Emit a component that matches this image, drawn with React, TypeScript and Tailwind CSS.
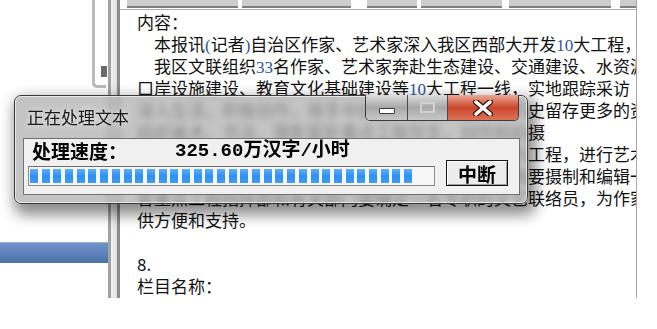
const serif = "font-['Liberation_Serif',serif] text-[#2f5596]";

function N({ children }: { children: React.ReactNode }) {
  return <span className={serif}>{children}</span>;
}

const blocks = Array.from({ length: 33 });
const IND = "\u3000";

function Line({ children }: { children?: React.ReactNode }) {
  return <div className="h-[22px] whitespace-nowrap leading-[22px]">{children}</div>;
}

export default function App() {
  return (
    <div className="relative h-[329px] w-[657px] overflow-hidden bg-white font-['Noto_Sans_CJK_SC','Noto_Sans',sans-serif] text-[#111]">
      <div className="flex h-[298px]">
        {/* left tree pane */}
        <div className="flex w-[108px] flex-col">
          <div className="flex h-[88px] justify-end pr-[2px]">
            <div className="flex w-[14px] flex-col justify-end rounded-bl-[5px] border-b-[3px] border-l-[3px] border-[#bcbcbc] pb-[8px] pl-[6px]">
              <div className="h-[11px] w-[6px] bg-[#6b6b6b]" />
            </div>
          </div>
          <div className="mt-[154px] h-[21px] border-t border-[#9db5dc] bg-gradient-to-b from-[#6f93c9] to-[#4d71aa]" />
        </div>

        {/* splitter */}
        <div className="flex w-[12px]">
          <div className="w-[3px] bg-[#a2a2a2]" />
          <div className="w-[6px] bg-gradient-to-r from-[#f2f2f2] to-[#dedede]" />
          <div className="w-[3px] bg-[#8c8c8c]" />
        </div>

        {/* document pane */}
        <div className="w-[517px] overflow-hidden border-r border-[#a6a6a6]">
          <div className="flex h-[8px] pl-[7px]">
            <div className="w-[111px] border-b-2 border-[#7e7e7e] bg-[#cdcdcd]" />
            <div className="ml-[4px] w-[110px] border-b-2 border-[#7e7e7e] bg-[#cdcdcd]" />
            <div className="ml-[16px] w-[50px] border-b-2 border-[#7e7e7e] bg-[#cdcdcd]" />
            <div className="ml-[4px] w-[81px] border-b-2 border-[#7e7e7e] bg-[#cdcdcd]" />
            <div className="ml-[7px] w-[103px] border-b-2 border-[#7e7e7e] bg-[#cdcdcd]" />
            <div className="ml-[9px] w-[16px] border-b-2 border-[#7e7e7e] bg-[#cdcdcd]" />
          </div>
          <div className="mt-px h-px bg-[#ababab]" />

          <div className="pl-[17px] pt-px text-[17px]">
            <Line>内容：</Line>
            <Line>
              {IND}本报讯<N>(</N>记者<N>)</N>自治区作家、艺术家深入我区西部大开发<N>10</N>大工程，
            </Line>
            <Line>
              {IND}我区文联组织<N>33</N>名作家、艺术家奔赴生态建设、交通建设、水资源
            </Line>
            <Line>
              口岸设施建设、教育文化基础建设等<N>10</N>大工程一线，实地跟踪采访
            </Line>
            <Line>深入生活，积极创作，用手中的笔、相机和镜头为历史留存更多的资料</Line>
            <Line>组织美术、书法、摄影家赴重点工程写生、创作和拍摄</Line>
            <Line>音乐家、舞蹈家、戏剧家深入西部大开发的各项重点工程，进行艺术采风</Line>
            <Line>文联还将组织专业摄影人员全程跟踪采访，同时还需要摄制和编辑一部</Line>
            <Line>各重点工程指挥部和有关部门要确定一名专职的文艺联络员，为作家艺术家提</Line>
            <Line>供方便和支持。</Line>
            <Line />
            <Line>8.</Line>
            <Line>栏目名称：</Line>
          </div>
        </div>
      </div>

      {/* progress dialog */}
      <div className="absolute left-[14px] top-[95px] h-[109px] w-[514px] rounded-[7px] border border-[#3a3a3a] bg-[#b0b0b0]/75 shadow-[4px_7px_14px_4px_rgba(0,0,0,0.45)] backdrop-blur-[3px]">
        <div className="flex h-full flex-col rounded-[6px] border border-white/60 pb-[7px] pl-[7px] pr-[6px]">
          <div className="flex h-[41px] items-start justify-between">
            <div className="pl-[4px] pt-[9px] text-[17px] leading-[22px] text-[#1a1a1a] [text-shadow:0_0_6px_rgba(255,255,255,0.9)]">
              正在处理文本
            </div>
            <div className="-mt-[2px] mr-[1px] flex h-[26px] overflow-hidden rounded-b-[5px] border border-t-0 border-[#3c3c3c]">
              <div className="flex w-[42px] items-center justify-center border-r border-[#4a4a4a] bg-gradient-to-b from-[#dedede] via-[#a8a8a8] to-[#c8c8c8]">
                <div className="mt-[7px] h-[6px] w-[16px] rounded-[1px] border border-[#3a3a3a] bg-white" />
              </div>
              <div className="flex w-[40px] items-center justify-center border-r border-[#4a4a4a] bg-gradient-to-b from-[#dedede] via-[#a8a8a8] to-[#c8c8c8]">
                <div className="h-[11px] w-[15px] border-2 border-[#d2d2d2] bg-transparent" />
              </div>
              <div className="flex w-[70px] items-center justify-center bg-gradient-to-b from-[#eaa896] via-[#c9462a] to-[#dd7255]">
                <svg width="22" height="16" viewBox="0 0 22 16">
                  <path d="M4 2 L18 14 M18 2 L4 14" stroke="#3a1a12" strokeWidth="6" strokeLinecap="round" />
                  <path d="M4 2 L18 14 M18 2 L4 14" stroke="#ffffff" strokeWidth="3.5" strokeLinecap="round" />
                </svg>
              </div>
            </div>
          </div>

          <div className="flex flex-1 border border-[#707070] bg-[#f0f0f0] pl-[4px] pt-[2px]">
            <div className="flex w-[407px] flex-col">
              <div className="flex h-[20px] pl-[4px] text-[19px] font-bold leading-[20px] text-black">
                <div className="w-[143px]">处理速度：</div>
                <div className="font-['Liberation_Mono','Noto_Sans_CJK_SC',monospace]">325.60万汉字/小时</div>
              </div>
              <div className="mt-[5px] flex h-[20px] gap-[3.7px] border border-[#8a8a8a] border-t-[#6c6c6c] bg-[#f6f6f6] px-[1px] py-[2px]">
                {blocks.map((_, i) => (
                  <div key={i} className="w-[8px] bg-gradient-to-b from-[#5cb0ff] via-[#2e90f2] to-[#3d9cf5]" />
                ))}
              </div>
            </div>
            <div className="ml-[11px] mt-[19px] flex h-[26px] w-[62px] items-center justify-center border border-[#161616] bg-[#ececec] text-[19px] font-bold leading-none text-black shadow-[inset_1px_1px_0_#ffffff,inset_-1px_-1px_0_#9a9a9a]">
              中断
            </div>
          </div>
        </div>
      </div>
    </div>
  );
}
